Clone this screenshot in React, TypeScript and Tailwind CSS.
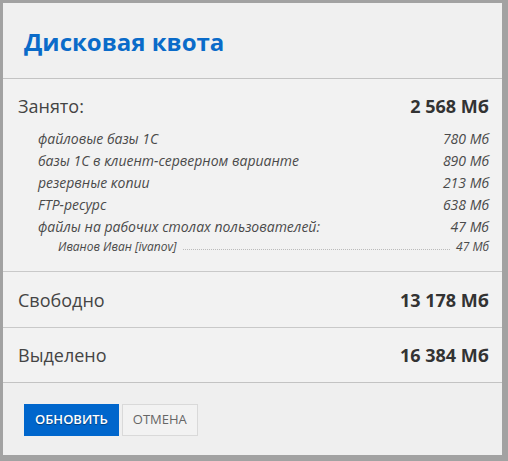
import React from 'react';

const usage = [
  { label: 'файловые базы 1С', value: '780 Мб' },
  { label: 'базы 1С в клиент-серверном варианте', value: '890 Мб' },
  { label: 'резервные копии', value: '213 Мб' },
  { label: 'FTP-ресурс', value: '638 Мб' },
  { label: 'файлы на рабочих столах пользователей:', value: '47 Мб' },
];

const App: React.FC = () => {
  return (
    <div className="w-[508px] h-[461px] bg-[#a2a2a2] pt-[3px] pl-[3px]" style={{ fontFamily: '"Open Sans", "Noto Sans", sans-serif' }}>
      <div className="w-[499px] h-[452px] bg-[#f2f2f2] flex flex-col text-[#333]">
        {/* header */}
        <div className="h-[76px] bg-[#f0f0f0] border-b border-[#c3c3c3] flex items-center px-[21px] shrink-0">
          <h1 className="text-[24px] font-bold text-[#0a6bc9] leading-none pt-[3px]">Дисковая квота</h1>
        </div>

        {/* used */}
        <div className="border-b border-[#c9c9c9] pt-[16px] pb-[15px] pl-[15px] pr-[13px]">
          <div className="flex justify-between items-center h-[22px]">
            <span className="text-[18px] text-[#444]">Занято:</span>
            <span className="text-[18px] font-bold">2 568 Мб</span>
          </div>
          <div className="mt-[10px] pl-[20px] italic text-[14px] text-[#4a4a4a]">
            {usage.map((u) => (
              <div key={u.label} className="flex justify-between items-center h-[22px]">
                <span>{u.label}</span>
                <span>{u.value}</span>
              </div>
            ))}
            <div className="flex items-center h-[19px] pl-[20px] text-[12px]">
              <span>Иванов Иван [ivanov]</span>
              <span className="flex-1 border-b border-dotted border-[#bbb] mx-[6px] translate-y-[3px]"></span>
              <span>47 Мб</span>
            </div>
          </div>
        </div>

        {/* free */}
        <div className="border-b border-[#c9c9c9] h-[56px] flex justify-between items-center pl-[15px] pr-[13px] pt-[1px]">
          <span className="text-[18px] text-[#444]">Свободно</span>
          <span className="text-[18px] font-bold">13 178 Мб</span>
        </div>

        {/* allotted */}
        <div className="border-b border-[#c3c3c3] h-[55px] flex justify-between items-center pl-[15px] pr-[13px]">
          <span className="text-[18px] text-[#444]">Выделено</span>
          <span className="text-[18px] font-bold">16 384 Мб</span>
        </div>

        {/* footer */}
        <div className="flex-1 bg-[#efefef] flex items-start gap-[3px] pl-[21px] pt-[21px]">
          <button className="h-[32px] px-[11px] bg-[#0066cc] text-white text-[13px] font-semibold uppercase [text-shadow:0_1px_1px_rgba(0,0,0,0.4)]">
            Обновить
          </button>
          <button className="h-[32px] px-[10px] bg-[#f2f2f2] border border-[#d9d9d9] text-[#666] text-[13px] uppercase">
            Отмена
          </button>
        </div>
      </div>
    </div>
  );
};

export default App;
